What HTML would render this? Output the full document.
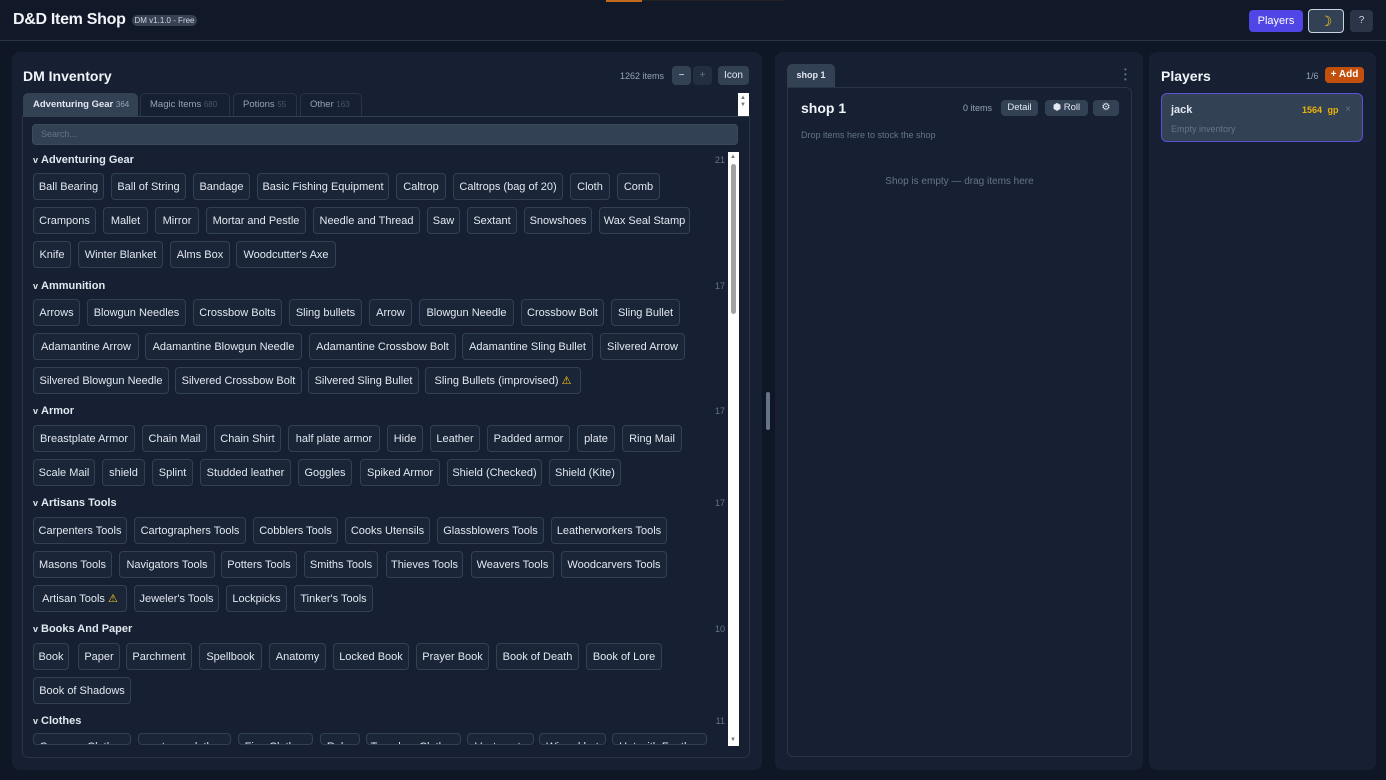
<!DOCTYPE html>
<html><head><meta charset="utf-8">
<style>
*{box-sizing:border-box;margin:0;padding:0}
html,body{width:1386px;height:780px;overflow:hidden}
body{background:#0f1625;font-family:"Liberation Sans",sans-serif;color:#e2e8f0;position:relative}
.a{position:absolute}
.hdr{left:0;top:0;width:1386px;height:41px;background:#111827;border-bottom:1px solid #2b3547}
.panel{background:#172032;border-radius:8px}
.c{position:absolute;height:27px;border:1px solid #334155;background:#1b2538;border-radius:4px;font-size:11px;line-height:26px;text-align:center;white-space:nowrap;overflow:hidden;color:#e2e8f0}
.sh{position:absolute;left:33px;font-size:11px;font-weight:bold;color:#e2e8f0}
.sh i{font-style:normal;font-size:9px;margin-right:3px}
.cnt{position:absolute;left:700px;width:25px;text-align:right;font-size:9px;color:#64748b}
.btn{position:absolute;border-radius:4px;font-size:10px;text-align:center;color:#e2e8f0}
.w{color:#facc15;font-size:11px}
</style></head><body>
<div class="a hdr"></div>
<div class="a" style="left:606px;top:0;width:36px;height:2px;background:#c2691e"></div>
<div class="a" style="left:642px;top:0;width:142px;height:1px;background:#222"></div>
<div class="a" style="left:13px;top:11px;font-size:16px;font-weight:bold;color:#f1f5f9;letter-spacing:-0.3px">D&amp;D Item Shop</div>
<div class="a" style="left:132px;top:15px;width:65px;height:11px;border-radius:6px;background:#374151;font-size:8px;line-height:11px;text-align:center;color:#cbd5e1">DM v1.1.0 - Free</div>
<div class="btn" style="left:1249px;top:10px;width:54px;height:22px;background:#4f46e5;line-height:22px;font-size:11px;color:#fff">Players</div>
<div class="btn" style="left:1308px;top:9px;width:36px;height:24px;background:#334155;border:1px solid #cbd5e1;line-height:22px;color:#facc15;font-size:14px">&#9789;</div>
<div class="btn" style="left:1350px;top:10px;width:23px;height:22px;background:#2b3547;line-height:22px;color:#cbd5e1">?</div>

<!-- left panel -->
<div class="a panel" style="left:12px;top:52px;width:750px;height:718px"></div>
<div class="a" style="left:23px;top:68px;font-size:14px;font-weight:bold;color:#f1f5f9">DM Inventory</div>
<div class="a" style="left:620px;top:71px;font-size:9px;color:#94a3b8">1262 items</div>
<div class="btn" style="left:672px;top:66px;width:19px;height:19px;background:#334155;line-height:19px">&minus;</div>
<div class="btn" style="left:693px;top:66px;width:19px;height:19px;background:#232e40;line-height:19px;color:#64748b">+</div>
<div class="btn" style="left:718px;top:66px;width:31px;height:19px;background:#334155;line-height:19px">Icon</div>
<div class="a" style="left:738px;top:93px;width:11px;height:23px;background:#fff"></div>
<div class="a" style="left:23px;top:93px;width:115px;height:24px;background:#334155;border-radius:5px 5px 0 0;font-size:9.5px;font-weight:bold;line-height:24px;padding-left:10px">Adventuring Gear <span style="font-size:8px;color:#94a3b8;font-weight:normal">364</span></div>
<div class="a" style="left:140px;top:93px;width:90px;height:23px;border:1px solid #2a3447;border-bottom:0;border-radius:5px 5px 0 0;font-size:9.5px;line-height:22px;padding-left:9px;color:#94a3b8">Magic Items <span style="font-size:8px;color:#475569">680</span></div>
<div class="a" style="left:233px;top:93px;width:64px;height:23px;border:1px solid #2a3447;border-bottom:0;border-radius:5px 5px 0 0;font-size:9.5px;line-height:22px;padding-left:9px;color:#94a3b8">Potions <span style="font-size:8px;color:#475569">55</span></div>
<div class="a" style="left:300px;top:93px;width:62px;height:23px;border:1px solid #2a3447;border-bottom:0;border-radius:5px 5px 0 0;font-size:9.5px;line-height:22px;padding-left:9px;color:#94a3b8">Other <span style="font-size:8px;color:#475569">163</span></div>
<div class="a" style="left:22px;top:116px;width:728px;height:642px;border:1px solid #2a3447;border-top:1px solid #334155;border-radius:0 0 6px 6px"></div>
<div class="a" style="left:32px;top:124px;width:706px;height:21px;background:#334155;border:1px solid #3d4a5e;border-radius:4px;font-size:9px;line-height:19px;padding-left:8px;color:#64748b">Search...</div>
<div class="a" style="left:728px;top:152px;width:11px;height:594px;background:#fff"></div>
<div class="a" style="left:731px;top:164px;width:5px;height:150px;background:#a1a1a1;border-radius:3px"></div>
<div class="a" style="left:730px;top:154px;font-size:6px;color:#777">&#9650;</div>
<div class="a" style="left:730px;top:737px;font-size:6px;color:#777">&#9660;</div>
<div class="a" style="left:740px;top:95px;font-size:6px;color:#777;line-height:7px">&#9650;<br>&#9660;</div>

<div class="a" style="left:0;top:150px;width:728px;height:595px;overflow:hidden">
<div class="a" style="left:0;top:-150px;width:728px;height:745px">
<div class="sh" style="top:154px"><i>v</i>Adventuring Gear</div><div class="cnt" style="top:155px">21</div>
<div class="c" style="left:33px;top:173px;width:71px">Ball Bearing</div>
<div class="c" style="left:111px;top:173px;width:75px">Ball of String</div>
<div class="c" style="left:193px;top:173px;width:57px">Bandage</div>
<div class="c" style="left:257px;top:173px;width:132px">Basic Fishing Equipment</div>
<div class="c" style="left:396px;top:173px;width:50px">Caltrop</div>
<div class="c" style="left:453px;top:173px;width:110px">Caltrops (bag of 20)</div>
<div class="c" style="left:570px;top:173px;width:40px">Cloth</div>
<div class="c" style="left:617px;top:173px;width:43px">Comb</div>
<div class="c" style="left:33px;top:207px;width:63px">Crampons</div>
<div class="c" style="left:103px;top:207px;width:45px">Mallet</div>
<div class="c" style="left:155px;top:207px;width:44px">Mirror</div>
<div class="c" style="left:206px;top:207px;width:100px">Mortar and Pestle</div>
<div class="c" style="left:313px;top:207px;width:107px">Needle and Thread</div>
<div class="c" style="left:427px;top:207px;width:33px">Saw</div>
<div class="c" style="left:467px;top:207px;width:50px">Sextant</div>
<div class="c" style="left:524px;top:207px;width:68px">Snowshoes</div>
<div class="c" style="left:599px;top:207px;width:91px">Wax Seal Stamp</div>
<div class="c" style="left:33px;top:241px;width:38px">Knife</div>
<div class="c" style="left:78px;top:241px;width:85px">Winter Blanket</div>
<div class="c" style="left:170px;top:241px;width:60px">Alms Box</div>
<div class="c" style="left:236px;top:241px;width:100px">Woodcutter's Axe</div>

<div class="sh" style="top:280px"><i>v</i>Ammunition</div><div class="cnt" style="top:281px">17</div>
<div class="c" style="left:33px;top:299px;width:47px">Arrows</div>
<div class="c" style="left:87px;top:299px;width:99px">Blowgun Needles</div>
<div class="c" style="left:193px;top:299px;width:89px">Crossbow Bolts</div>
<div class="c" style="left:289px;top:299px;width:73px">Sling bullets</div>
<div class="c" style="left:369px;top:299px;width:43px">Arrow</div>
<div class="c" style="left:419px;top:299px;width:95px">Blowgun Needle</div>
<div class="c" style="left:521px;top:299px;width:83px">Crossbow Bolt</div>
<div class="c" style="left:611px;top:299px;width:69px">Sling Bullet</div>
<div class="c" style="left:33px;top:333px;width:106px">Adamantine Arrow</div>
<div class="c" style="left:145px;top:333px;width:157px">Adamantine Blowgun Needle</div>
<div class="c" style="left:309px;top:333px;width:147px">Adamantine Crossbow Bolt</div>
<div class="c" style="left:462px;top:333px;width:131px">Adamantine Sling Bullet</div>
<div class="c" style="left:600px;top:333px;width:85px">Silvered Arrow</div>
<div class="c" style="left:33px;top:367px;width:136px">Silvered Blowgun Needle</div>
<div class="c" style="left:175px;top:367px;width:127px">Silvered Crossbow Bolt</div>
<div class="c" style="left:308px;top:367px;width:111px">Silvered Sling Bullet</div>
<div class="c" style="left:425px;top:367px;width:156px">Sling Bullets (improvised) <span class="w">&#9888;</span></div>

<div class="sh" style="top:405px"><i>v</i>Armor</div><div class="cnt" style="top:406px">17</div>
<div class="c" style="left:33px;top:425px;width:102px">Breastplate Armor</div>
<div class="c" style="left:142px;top:425px;width:65px">Chain Mail</div>
<div class="c" style="left:214px;top:425px;width:67px">Chain Shirt</div>
<div class="c" style="left:288px;top:425px;width:92px">half plate armor</div>
<div class="c" style="left:387px;top:425px;width:36px">Hide</div>
<div class="c" style="left:430px;top:425px;width:50px">Leather</div>
<div class="c" style="left:487px;top:425px;width:83px">Padded armor</div>
<div class="c" style="left:577px;top:425px;width:38px">plate</div>
<div class="c" style="left:622px;top:425px;width:60px">Ring Mail</div>
<div class="c" style="left:33px;top:459px;width:62px">Scale Mail</div>
<div class="c" style="left:102px;top:459px;width:43px">shield</div>
<div class="c" style="left:152px;top:459px;width:41px">Splint</div>
<div class="c" style="left:200px;top:459px;width:91px">Studded leather</div>
<div class="c" style="left:298px;top:459px;width:54px">Goggles</div>
<div class="c" style="left:360px;top:459px;width:80px">Spiked Armor</div>
<div class="c" style="left:447px;top:459px;width:95px">Shield (Checked)</div>
<div class="c" style="left:549px;top:459px;width:72px">Shield (Kite)</div>

<div class="sh" style="top:497px"><i>v</i>Artisans Tools</div><div class="cnt" style="top:498px">17</div>
<div class="c" style="left:33px;top:517px;width:94px">Carpenters Tools</div>
<div class="c" style="left:134px;top:517px;width:112px">Cartographers Tools</div>
<div class="c" style="left:253px;top:517px;width:85px">Cobblers Tools</div>
<div class="c" style="left:345px;top:517px;width:85px">Cooks Utensils</div>
<div class="c" style="left:437px;top:517px;width:107px">Glassblowers Tools</div>
<div class="c" style="left:551px;top:517px;width:116px">Leatherworkers Tools</div>
<div class="c" style="left:33px;top:551px;width:79px">Masons Tools</div>
<div class="c" style="left:119px;top:551px;width:96px">Navigators Tools</div>
<div class="c" style="left:221px;top:551px;width:76px">Potters Tools</div>
<div class="c" style="left:304px;top:551px;width:74px">Smiths Tools</div>
<div class="c" style="left:386px;top:551px;width:77px">Thieves Tools</div>
<div class="c" style="left:471px;top:551px;width:83px">Weavers Tools</div>
<div class="c" style="left:561px;top:551px;width:106px">Woodcarvers Tools</div>
<div class="c" style="left:33px;top:585px;width:94px">Artisan Tools <span class="w">&#9888;</span></div>
<div class="c" style="left:134px;top:585px;width:85px">Jeweler's Tools</div>
<div class="c" style="left:226px;top:585px;width:61px">Lockpicks</div>
<div class="c" style="left:294px;top:585px;width:79px">Tinker's Tools</div>

<div class="sh" style="top:623px"><i>v</i>Books And Paper</div><div class="cnt" style="top:624px">10</div>
<div class="c" style="left:33px;top:643px;width:36px">Book</div>
<div class="c" style="left:78px;top:643px;width:42px">Paper</div>
<div class="c" style="left:126px;top:643px;width:66px">Parchment</div>
<div class="c" style="left:199px;top:643px;width:63px">Spellbook</div>
<div class="c" style="left:269px;top:643px;width:57px">Anatomy</div>
<div class="c" style="left:333px;top:643px;width:76px">Locked Book</div>
<div class="c" style="left:416px;top:643px;width:73px">Prayer Book</div>
<div class="c" style="left:496px;top:643px;width:83px">Book of Death</div>
<div class="c" style="left:586px;top:643px;width:76px">Book of Lore</div>
<div class="c" style="left:33px;top:677px;width:98px">Book of Shadows</div>

<div class="sh" style="top:715px"><i>v</i>Clothes</div><div class="cnt" style="top:716px">11</div>
<div class="c" style="left:33px;top:733px;width:98px;height:12px">Common Clothes</div>
<div class="c" style="left:138px;top:733px;width:93px;height:12px">costume clothes</div>
<div class="c" style="left:238px;top:733px;width:75px;height:12px">Fine Clothes</div>
<div class="c" style="left:320px;top:733px;width:40px;height:12px">Robe</div>
<div class="c" style="left:366px;top:733px;width:95px;height:12px">Travelers Clothes</div>
<div class="c" style="left:467px;top:733px;width:67px;height:12px">Vestments</div>
<div class="c" style="left:539px;top:733px;width:67px;height:12px">Wizard hat</div>
<div class="c" style="left:612px;top:733px;width:95px;height:12px">Hat with Feather</div>
</div></div>

<!-- splitter -->
<div class="a" style="left:766px;top:392px;width:4px;height:38px;background:#64748b;border-radius:2px"></div>

<!-- middle -->
<div class="a panel" style="left:775px;top:52px;width:368px;height:718px"></div>
<div class="a" style="left:787px;top:64px;width:48px;height:23px;background:#334155;border-radius:5px 5px 0 0;font-size:9px;font-weight:bold;line-height:23px;text-align:center">shop 1</div>
<div class="a" style="left:1124px;top:67px;width:4px;height:16px;font-size:8px;color:#64748b;line-height:5px">&#8226;<br>&#8226;<br>&#8226;</div>
<div class="a" style="left:787px;top:87px;width:345px;height:670px;border:1px solid #2a3447;border-radius:0 6px 6px 6px"></div>
<div class="a" style="left:801px;top:100px;font-size:14px;font-weight:bold;color:#f1f5f9">shop 1</div>
<div class="a" style="left:963px;top:103px;font-size:9px;color:#94a3b8">0 items</div>
<div class="btn" style="left:1001px;top:100px;width:37px;height:16px;background:#334155;line-height:16px;font-size:9.5px">Detail</div>
<div class="btn" style="left:1045px;top:100px;width:43px;height:16px;background:#334155;line-height:16px;font-size:9.5px">&#11042; Roll</div>
<div class="btn" style="left:1093px;top:100px;width:26px;height:16px;background:#334155;line-height:16px;font-size:10px">&#9881;</div>
<div class="a" style="left:801px;top:130px;font-size:9px;color:#64748b">Drop items here to stock the shop</div>
<div class="a" style="left:787px;top:176px;width:345px;text-align:center;font-size:10px;color:#64748b">Shop is empty — drag items here</div>

<!-- right -->
<div class="a panel" style="left:1149px;top:52px;width:227px;height:718px"></div>
<div class="a" style="left:1161px;top:68px;font-size:14px;font-weight:bold;color:#f1f5f9">Players</div>
<div class="a" style="left:1306px;top:71px;font-size:9px;color:#94a3b8">1/6</div>
<div class="btn" style="left:1325px;top:67px;width:39px;height:16px;background:#c2500c;line-height:16px;font-size:10px;font-weight:bold;color:#fff">+ Add</div>
<div class="a" style="left:1161px;top:93px;width:202px;height:49px;background:#334155;border:1px solid #5b52d6;border-radius:6px"></div>
<div class="a" style="left:1171px;top:104px;font-size:11px;font-weight:bold">jack</div>
<div class="a" style="left:1302px;top:105px;font-size:9px;font-weight:bold;color:#eab308">1564 <span style="margin-left:3px">gp</span></div>
<div class="a" style="left:1345px;top:104px;font-size:10px;color:#64748b">×</div>
<div class="a" style="left:1171px;top:124px;font-size:9px;color:#64748b">Empty inventory</div>
</body></html>
